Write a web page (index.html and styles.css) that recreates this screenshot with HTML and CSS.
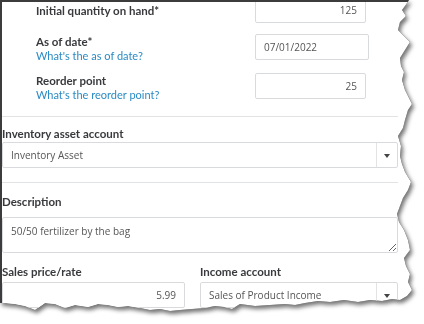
FILE: index.html
```html
<!DOCTYPE html>
<html lang="en">
<head>
    <meta charset="UTF-8">
    <title>Product details</title>
    <link rel="stylesheet" href="styles.css">
</head>
<body>
    <div class="frame">
        <div class="paper">
            <div class="qty-section">
                <div class="qty-row first">
                    <div class="qty-label">
                        <div class="label">Initial quantity on hand*</div>
                    </div>
                    <div class="field num">125</div>
                </div>
                <div class="qty-row">
                    <div class="qty-label">
                        <div class="label">As of date*</div>
                        <a class="help">What's the as of date?</a>
                    </div>
                    <div class="field date">07/01/2022</div>
                </div>
                <div class="qty-row">
                    <div class="qty-label">
                        <div class="label">Reorder point</div>
                        <a class="help">What's the reorder point?</a>
                    </div>
                    <div class="field num">25</div>
                </div>
            </div>

            <div class="divider"></div>

            <div class="group asset">
                <div class="label">Inventory asset account</div>
                <div class="select">
                    <span class="select-text">Inventory Asset</span>
                    <span class="select-arrow"></span>
                </div>
            </div>

            <div class="divider second"></div>

            <div class="group desc">
                <div class="label">Description</div>
                <textarea class="textarea">50/50 fertilizer by the bag</textarea>
            </div>

            <div class="pair">
                <div class="pair-col price">
                    <div class="label">Sales price/rate</div>
                    <div class="field num wide">5.99</div>
                </div>
                <div class="pair-col income">
                    <div class="label">Income account</div>
                    <div class="select">
                        <span class="select-text">Sales of Product Income</span>
                        <span class="select-arrow"></span>
                    </div>
                </div>
            </div>
        </div>
    </div>
</body>
</html>
```

FILE: styles.css
```css
* {
    margin: 0;
    padding: 0;
    box-sizing: border-box;
}

body {
    width: 424px;
    height: 324px;
    overflow: hidden;
    background: #fff;
    font-family: "Lato", "Open Sans", sans-serif;
}

/* torn paper edge + its shadow */
.frame {
    width: 424px;
    height: 324px;
    filter: drop-shadow(0 0 0.6px #222) drop-shadow(2px 3px 2px rgba(0, 0, 0, 0.55));
}

.paper {
    width: 424px;
    height: 324px;
    background: #fff;
    border-top: 2px solid #3c3c3c;
    border-left: 2px solid #3c3c3c;
    overflow: hidden;
    clip-path: polygon(0 0, 409px 0, 405px 6px, 402px 10px, 406px 16px, 400px 22px, 398px 30px, 404px 36px, 410px 42px, 405px 50px, 400px 58px, 401px 66px, 404px 72px, 402px 80px, 405px 90px, 409px 98px, 412px 104px, 408px 110px, 405px 120px, 403px 128px, 398px 136px, 401px 146px, 400px 156px, 402px 164px, 405px 172px, 411px 182px, 408px 190px, 403px 198px, 400px 206px, 397px 214px, 399px 222px, 404px 230px, 408px 240px, 410px 250px, 404px 258px, 406px 266px, 410px 274px, 408px 282px, 412px 290px, 407px 296px, 400px 300px, 392px 299px, 382px 301px, 370px 300px, 358px 302px, 344px 300px, 330px 302px, 318px 301px, 305px 303px, 295px 305px, 285px 304px, 270px 305px, 255px 306px, 240px 304px, 232px 309px, 224px 307px, 215px 306px, 205px 308px, 192px 309px, 180px 310px, 170px 311px, 160px 309px, 150px 310px, 140px 308px, 128px 306px, 118px 307px, 108px 305px, 98px 304px, 88px 307px, 75px 305px, 65px 308px, 55px 304px, 45px 303px, 35px 310px, 25px 306px, 15px 304px, 5px 303px, 0 303px);
}

.label {
    font-size: 11.5px;
    font-weight: 700;
    line-height: 14px;
    color: #393a3d;
}

.help {
    display: block;
    font-size: 11px;
    line-height: 13px;
    color: #2a8bc4;
}

/* quantity block */
.qty-section {
    padding-left: 34px;
}

.qty-row {
    display: flex;
    align-items: flex-start;
    margin-top: 11px;
}

.qty-row.first {
    align-items: center;
    margin-top: -5px;
}

.qty-label {
    width: 219px;
    padding-top: 1px;
}

.field {
    height: 26px;
    border: 1px solid #d8dadd;
    border-radius: 2px;
    font-family: "Open Sans", sans-serif;
    font-size: 10px;
    line-height: 24px;
    color: #555;
    padding: 0 8px;
    background: #fff;
}

.field.num {
    width: 111px;
    text-align: right;
}

.field.date {
    width: 114px;
}

.divider {
    width: 396px;
    height: 1px;
    background: #e2e3e5;
    margin-top: 15px;
}

.divider.second {
    margin-top: 14px;
}

/* full-width groups */
.group {
    width: 396px;
}

.group.asset {
    margin-top: 10px;
}

.group.asset .label {
    margin-bottom: 1px;
}

.group.desc {
    margin-top: 12px;
}

.group.desc .label {
    margin-bottom: 8px;
}

.select {
    display: flex;
    align-items: center;
    height: 26px;
    border: 1px solid #d8dadd;
    border-radius: 2px;
    font-family: "Open Sans", sans-serif;
    font-size: 10px;
    color: #555;
}

.select-text {
    flex: 1;
    padding-left: 8px;
}

.select-arrow {
    width: 21px;
    height: 100%;
    border-left: 1px solid #e2e3e5;
    position: relative;
}

.select-arrow::after {
    content: "";
    position: absolute;
    left: 7px;
    top: 11px;
    border-left: 3px solid transparent;
    border-right: 3px solid transparent;
    border-top: 4px solid #444;
}

.textarea {
    display: block;
    width: 396px;
    height: 36px;
    border: 1px solid #d8dadd;
    border-radius: 2px;
    font-family: "Open Sans", sans-serif;
    font-size: 10px;
    color: #555;
    padding: 6px 8px;
    resize: vertical;
    outline: none;
}

/* price + income row */
.pair {
    display: flex;
    gap: 15px;
    width: 396px;
    margin-top: 12px;
}

.pair-col .label {
    margin-bottom: 3px;
}

.price {
    width: 183px;
}

.field.wide {
    width: 183px;
}

.income {
    flex: 1;
}
```
